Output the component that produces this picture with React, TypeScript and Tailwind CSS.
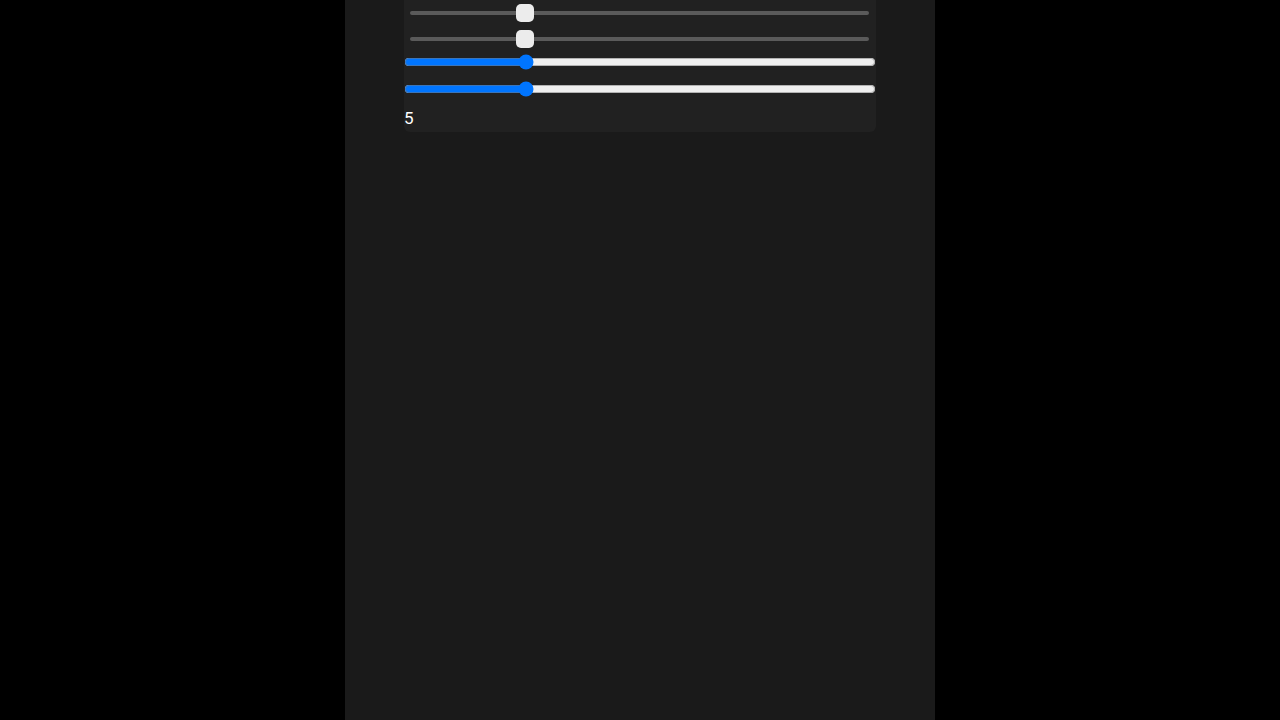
import React, { useState } from 'react';

const CustomSlider: React.FC<{ value: number; max: number }> = ({ value, max }) => {
  const pct = (value / max) * 100;
  return (
    <div className="h-[26px] pl-[6px] pr-[7px] flex items-center">
      <div className="relative w-full h-[4px] rounded-full bg-[#5a5a5a]">
        <div
          className="absolute top-1/2 w-[18px] h-[18px] -translate-x-1/2 -translate-y-1/2 rounded-[5px] bg-[#ececec]"
          style={{ left: `${pct}%` }}
        />
      </div>
    </div>
  );
};

const App: React.FC = () => {
  const [value, setValue] = useState(5);

  return (
    <div className="min-h-screen bg-black font-['Roboto',sans-serif]">
      <div className="w-[590px] min-h-screen mx-auto bg-[#1a1a1a]">
        <div className="w-[472px] mx-auto bg-[#212121] rounded-b-md flex flex-col pb-[2px]">
          <CustomSlider value={value} max={20} />
          <CustomSlider value={value} max={20} />
          <input
            type="range"
            min={0}
            max={20}
            value={value}
            onChange={(e) => setValue(Number(e.target.value))}
            className="w-full h-4 m-0 mt-[2px] block"
          />
          <input
            type="range"
            min={0}
            max={20}
            value={value}
            onChange={(e) => setValue(Number(e.target.value))}
            className="w-full h-4 m-0 mt-[11px] block"
          />
          <div className="mt-[9px] leading-6 text-[17px] text-white">{value}</div>
        </div>
      </div>
    </div>
  );
};

export default App;
